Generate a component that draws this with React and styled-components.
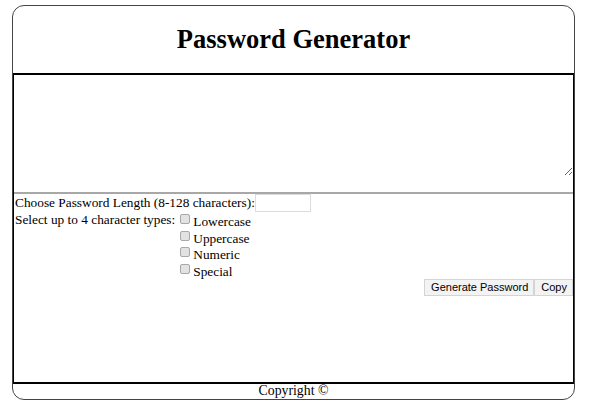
import React from 'react';
import styled, { createGlobalStyle } from 'styled-components';

const GlobalStyle = createGlobalStyle`
    body {
        margin: 0;
        background: #fff;
        font-family: "Liberation Serif", "Times New Roman", serif;
        color: #000;
    }
`

const Page = styled.div`
    padding: 5px 20px 0 12px;
`

const Card = styled.div`
    width: 561px;
    border: 1px solid #444;
    border-radius: 12px;
    overflow: hidden;
    display: flex;
    flex-direction: column;
`

const Header = styled.header`
    height: 67px;
    display: flex;
    align-items: center;
    justify-content: center;
`

const Title = styled.h1`
    margin: 0;
    font-size: 26.5px;
    font-weight: bold;
`

const Main = styled.main`
    height: 307px;
    border-top: 2px solid #000;
    border-bottom: 2px solid #000;
    border-left: 1px solid #000;
    border-right: 1px solid #000;
    display: flex;
    flex-direction: column;
    font-size: 13.33px;
`

const OutputWrap = styled.div`
    height: 117px;
    border-bottom: 2px solid #a8a8a8;
    display: flex;
`

const Output = styled.textarea`
    flex: 1;
    height: 101px;
    border: none;
    margin: 0;
    padding: 0;
    resize: vertical;
    outline: none;
    font-family: inherit;
`

const LengthRow = styled.div`
    display: flex;
    align-items: center;
    height: 18px;
    padding-left: 1px;
`

const TypesRow = styled.div`
    display: flex;
    align-items: flex-start;
    padding-left: 1px;
`

const LengthInput = styled.input`
    width: 52px;
    height: 16px;
    margin: 0;
    padding: 0 1px;
    border: 1px solid #dcdcdc;
    font-size: 13px;
`

const TypesLabel = styled.span`
    line-height: 16px;
    margin-right: 4px;
`

const TypeList = styled.div`
    display: flex;
    flex-direction: column;
`

const TypeOption = styled.label`
    display: flex;
    align-items: flex-start;
    height: 16.7px;
    line-height: 19px;
`

const Check = styled.input`
    appearance: none;
    width: 10px;
    height: 10px;
    margin: 2px 3px 0 1px;
    border: 1px solid #a8a8a8;
    border-radius: 2px;
    background: #e2e2e2;
`

const ButtonRow = styled.div`
    display: flex;
    justify-content: flex-end;
`

const Button = styled.button`
    font-family: "Liberation Sans", Arial, sans-serif;
    font-size: 11px;
    height: 17px;
    padding: 0 5px 0 6px;
    margin: 0;
    border: 1px solid #d4d4d4;
    background: #f3f3f3;
    color: #000;
`

const Footer = styled.footer`
    height: 15px;
    text-align: center;
    font-size: 13.8px;
    line-height: 14px;
`

const types = ['Lowercase', 'Uppercase', 'Numeric', 'Special']

function App() {
    return (
        <>
            <GlobalStyle />
            <Page>
                <Card>
                    <Header>
                        <Title>Password Generator</Title>
                    </Header>
                    <Main>
                        <OutputWrap>
                            <Output />
                        </OutputWrap>
                        <LengthRow>
                            Choose Password Length (8-128 characters):
                            <LengthInput type='text' />
                        </LengthRow>
                        <TypesRow>
                            <TypesLabel>Select up to 4 character types:</TypesLabel>
                            <TypeList>
                                {types.map((t) => (
                                    <TypeOption key={t}>
                                        <Check type='checkbox' />
                                        {t}
                                    </TypeOption>
                                ))}
                            </TypeList>
                        </TypesRow>
                        <ButtonRow>
                            <Button>Generate Password</Button>
                            <Button>Copy</Button>
                        </ButtonRow>
                    </Main>
                    <Footer>Copyright ©</Footer>
                </Card>
            </Page>
        </>
    )
}

export default App;
